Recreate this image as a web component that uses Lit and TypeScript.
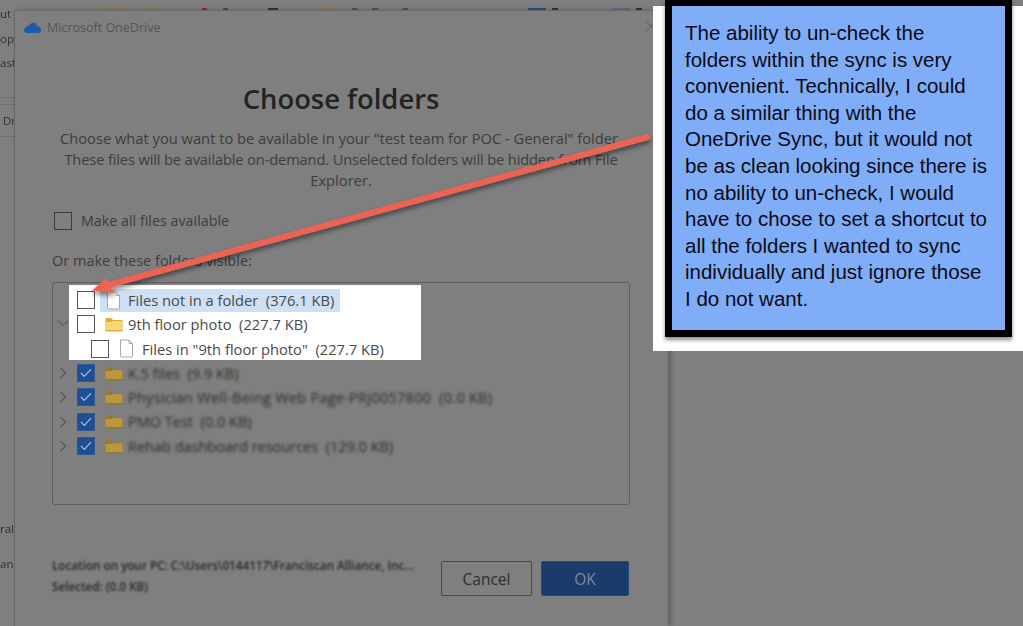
import { LitElement, html, css, svg } from "lit";
import { customElement } from "lit/decorators.js";

const CHEV_R = svg`<svg class="chev" width="10" height="12" viewBox="0 0 10 12"><path d="M2.5 1 L7.5 6 L2.5 11" fill="none" stroke="#3c3c3c" stroke-width="1"/></svg>`;
const CHEV_D = svg`<svg width="12" height="10" viewBox="0 0 12 10"><path d="M1 2.5 L6 7.5 L11 2.5" fill="none" stroke="#4a4a4a" stroke-width="1"/></svg>`;
const folder = (tab: string, body: string) => svg`<svg width="18" height="15" viewBox="0 0 18 15"><path d="M0.5 1.5 Q0.5 1 1 1 H6 L8 3 H17.5 V14.5 H0.5 Z" fill="${tab}"/><path d="M0.5 5 H7 L8.5 4 H17.5 V13 H0.5 Z" fill="${body}"/></svg>`;
const FILE = svg`<svg width="15" height="19" viewBox="0 0 15 19"><path d="M1.5 1 H10 L13.5 4.5 V17 Q13.5 18 12.5 18 H2.5 Q1.5 18 1.5 17 Z" fill="#fff" stroke="#a8a8a8"/><path d="M10 1 V4.5 H13.5" fill="none" stroke="#a8a8a8"/></svg>`;
const CHECK = svg`<svg width="12" height="10" viewBox="0 0 12 10"><path d="M1 5 L4.3 8.3 L11 1.2" fill="none" stroke="#a9c0e0" stroke-width="1.2"/></svg>`;

const blurredRows = [
  ["K.5 files", "(9.9 KB)", ""],
  ["Physician Well-Being Web Page-PRJ0057800", "(0.0 KB)", "wide"],
  ["PMO Test", "(0.0 KB)", ""],
  ["Rehab dashboard resources", "(129.0 KB)", ""],
];

const specks: [number, number, string][] = [
  [102, 23, "#8f7a4e"], [147, 11, "#8f7a4e"], [202, 5, "#7a3a30"], [223, 5, "#7a3a30"],
  [268, 10, "#333333"], [321, 16, "#8f7a4e"], [352, 6, "#555555"], [372, 6, "#555555"],
  [402, 6, "#555555"], [528, 18, "#2a4f86"], [552, 6, "#333333"], [612, 18, "#5a6f90"], [636, 6, "#333333"],
];

@customElement("app-root")
export class AppRoot extends LitElement {
  static styles = css`
    :host { display: block; width: 1023px; height: 626px; position: relative; overflow: hidden; background: #7f7f7f; font-family: "Open Sans", "Noto Sans", sans-serif; }
    .behind { position: absolute; left: 0; top: 0; width: 14px; height: 626px; overflow: hidden; color: #2f2f2f; font-size: 11.5px; line-height: 16px; filter: blur(0.3px); }
    .behind span { position: absolute; left: 0; white-space: nowrap; }
    .behind i { position: absolute; left: 0; width: 14px; height: 1px; background: #707070; }
    .speck { position: absolute; top: 8px; height: 2px; filter: blur(0.5px); }
    .dialog { position: absolute; left: 14px; top: 10px; width: 654px; height: 616px; box-sizing: border-box; background: #7f7f7f; border-left: 1px solid #666; border-top: 1px solid #6b6b6b; box-shadow: 3px 0 5px rgba(0,0,0,.25); display: flex; flex-direction: column; padding: 0 38px 0 37px; color: #3d3d3d; }
    .titlebar { display: flex; align-items: center; gap: 6px; height: 33px; margin: 0 0 0 -28px; font-size: 12.5px; color: #555; }
    .titlebar .close { margin-left: auto; margin-right: -27px; margin-bottom: 4px; display: flex; }
    h1 { margin: 36px 0 0; text-align: center; font-size: 27.4px; line-height: 38px; font-weight: 600; color: #232323; }
    .desc { margin: 10px 0 0; text-align: center; font-size: 14.7px; line-height: 21px; color: #3d3d3d; }
    .desc span { display: block; }
    .desc .l1 { padding-right: 4px; }
    .desc .l2 { letter-spacing: -0.15px; }
    .all { display: flex; align-items: center; gap: 9px; margin-top: 20px; font-size: 14.3px; line-height: 20px; padding-left: 2px; }
    .box { width: 18px; height: 18px; box-sizing: border-box; border: 1.5px solid #3b3b3b; flex: none; display: flex; align-items: center; justify-content: center; }
    .box.on { background: #1d4f91; border: 1px solid #2a5a9b; }
    .orline { margin-top: 20px; font-size: 14.5px; line-height: 20px; }
    .tree { margin-top: 11px; height: 223px; box-sizing: border-box; border: 1px solid #5d5d5d; border-radius: 3px; padding: 78px 0 0 5px; }
    .row { display: flex; align-items: center; height: 24.33px; font-size: 14.5px; }
    .row .chev { width: 10px; margin-right: 9px; flex: none; }
    .row .ico { display: flex; margin-left: 10px; margin-right: 5px; flex: none; }
    .row .lbl { filter: blur(1.4px); white-space: pre; color: #2e2a20; }
    .row .wide { letter-spacing: 0.25px; }
    .foot { margin: 55px 1px 0 0; display: flex; align-items: center; }
    .loc { flex: 1; margin-top: -5px; font-size: 11.7px; line-height: 21px; filter: blur(1.3px); white-space: nowrap; color: #2a2632; font-weight: 600; }
    .btns { display: flex; gap: 9px; }
    .btn { width: 91px; height: 35px; box-sizing: border-box; border-radius: 2px; display: flex; align-items: center; justify-content: center; font-size: 15.5px; }
    .cancel { border: 1px solid #4a4a4a; color: #2e2e2e; font-weight: 500; }
    .ok { background: #1a3c6b; border: 1px solid #1f4a82; color: #7a8ba3; width: 88px; }
    .white { position: absolute; left: 653px; top: 6px; width: 370px; height: 345px; background: #fff; }
    .callout { position: absolute; left: 665px; top: 0; width: 347px; height: 337px; box-sizing: border-box; border: 7px solid #000; border-top-width: 6px; background: #7fadf8; box-shadow: 0 3px 4px rgba(0,0,0,.45); padding: 14px 0 0 13px; font-family: "Liberation Sans", Arial, sans-serif; font-size: 20.5px; line-height: 26.6px; color: #0a0a14; white-space: pre-line; }
    .shot { position: absolute; left: 69px; top: 285px; width: 352px; height: 75px; box-sizing: border-box; background: #fff; padding: 3px 0 0 8px; font-size: 14.7px; color: #4a4a4a; }
    .shot .r { display: flex; align-items: center; height: 24.33px; white-space: pre; }
    .shot .box { border: 1.5px solid #555; }
    .shot .chevslot { position: absolute; left: -12px; top: 33px; display: flex; }
    .shot .sel { display: flex; align-items: center; height: 23px; background: #cde0f5; margin-left: 5px; padding: 0 6px 0 6px; }
    .shot .ico { display: flex; flex: none; margin-right: 7px; }
    .shot .fold { margin-left: 10px; margin-right: 5px; }
    .shot .indent { padding-left: 14px; }
    .shot .file2 { margin-left: 10px; margin-right: 8px; }
    .arrow { position: absolute; left: 0; top: 0; width: 1023px; height: 626px; pointer-events: none; overflow: visible; }
  `;

  render() {
    return html`
      <div class="behind">
        <span style="top:6px">ut</span>
        <span style="top:31px">op</span>
        <span style="top:55px">ast</span>
        <i style="top:97px"></i><i style="top:104px"></i>
        <span style="top:113px;left:3px">Dr</span>
        <i style="top:136px"></i>
        <span style="top:521px">ral</span>
        <span style="top:556px">anc</span>
      </div>
      ${specks.map(([x, w, c]) => html`<div class="speck" style="left:${x}px;width:${w}px;background:${c}"></div>`)}
      <div class="dialog">
        <div class="titlebar">
          <svg width="17" height="11" viewBox="0 0 17 11"><path d="M3.5 11 Q0 11 0 8 Q0 5.5 2.6 5 Q3.5 2.8 5.8 3 Q7.5 0 10.5 0.8 Q12.8 1.5 13 4 Q17 4.4 17 7.8 Q17 11 14 11 Z" fill="#1d5aa8"/></svg>
          <span>Microsoft OneDrive</span>
          <span class="close"><svg width="12" height="12" viewBox="0 0 12 12"><path d="M0.5 0.5 L11.5 11.5 M11.5 0.5 L0.5 11.5" stroke="#5f5f5f" stroke-width="1"/></svg></span>
        </div>
        <h1>Choose folders</h1>
        <p class="desc"><span class="l1">Choose what you want to be available in your "test team for POC - General" folder</span><span class="l2">These files will be available on-demand. Unselected folders will be hidden from File</span><span>Explorer.</span></p>
        <div class="all"><span class="box"></span>Make all files available</div>
        <div class="orline">Or make these folders visible:</div>
        <div class="tree">
          ${blurredRows.map(
            ([a, b, cls]) => html`<div class="row">${CHEV_R}<span class="box on">${CHECK}</span><span class="ico">${folder("#96782f", "#b8973f")}</span><span class="lbl ${cls}">${a}  ${b}</span></div>`
          )}
        </div>
        <div class="foot">
          <div class="loc">Location on your PC: C:\\Users\\0144117\\Franciscan Alliance, Inc...<br>Selected: (0.0 KB)</div>
          <div class="btns"><div class="btn cancel">Cancel</div><div class="btn ok">OK</div></div>
        </div>
      </div>
      <div class="shot">
        <div class="r"><span class="box"></span><span class="sel"><span class="ico">${FILE}</span>Files not in a folder  (376.1 KB)</span></div>
        <div class="r"><span class="chevslot">${CHEV_D}</span><span class="box"></span><span class="ico fold">${folder("#e0ac3c", "#f7d774")}</span>9th floor photo  (227.7 KB)</div>
        <div class="r indent"><span class="box"></span><span class="ico file2">${FILE}</span>Files in "9th floor photo"  (227.7 KB)</div>
      </div>
      <div class="white"></div>
      <div class="callout">The ability to un-check the
folders within the sync is very
convenient. Technically, I could
do a similar thing with the
OneDrive Sync, but it would not
be as clean looking since there is
no ability to un-check, I would
have to chose to set a shortcut to
all the folders I wanted to sync
individually and just ignore those
I do not want.</div>
      <svg class="arrow" viewBox="0 0 1023 626">
        <defs><filter id="s" x="-5%" y="-20%" width="110%" height="150%"><feDropShadow dx="0" dy="3" stdDeviation="2.5" flood-color="#000" flood-opacity=".5"/></filter></defs>
        <g filter="url(#s)" fill="#ec6353">
          <line x1="647.5" y1="137" x2="105" y2="286" stroke="#ec6353" stroke-width="6" stroke-linecap="round"/>
          <path d="M92 290.5 L106 278 L115 293 Z"/>
        </g>
      </svg>
    `;
  }
}
